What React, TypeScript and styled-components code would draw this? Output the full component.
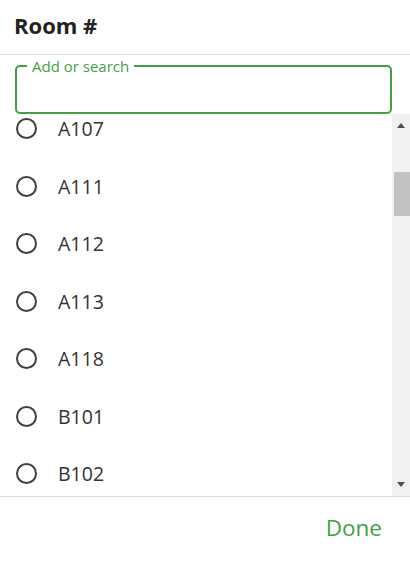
import React, { useLayoutEffect, useRef, useState } from "react";
import styled, { createGlobalStyle } from "styled-components";

const GlobalStyle = createGlobalStyle`
  html, body { margin: 0; padding: 0; background: #fff; }
  body { font-family: "Open Sans", "Noto Sans", sans-serif; }
  * { box-sizing: border-box; }
`;

const GREEN = "#43a047";
const ARROW = "#505050";
const BUTTON_H = 17;

const Dialog = styled.div`
  width: 410px;
  height: 562px;
  display: flex;
  flex-direction: column;
  background: #fff;
`;

const Header = styled.div`
  height: 55px;
  flex: none;
  display: flex;
  align-items: center;
  padding: 0 0 5px 14px;
  border-bottom: 1px solid #dcdcdc;
`;

const Title = styled.h2`
  margin: 0;
  font-size: 22px;
  font-weight: 700;
  color: #222;
`;

const SearchWrap = styled.div`
  flex: none;
  padding: 4px 18px 0 15px;
`;

const Field = styled.fieldset`
  margin: 0;
  height: 55px;
  border: 2px solid ${GREEN};
  border-radius: 5px;
  padding: 0 8px;
`;

const Legend = styled.legend`
  margin-left: 2px;
  padding: 0 5px;
  font-size: 15px;
  color: ${GREEN};
  line-height: 14px;
`;

const ScrollArea = styled.div`
  flex: 1;
  min-height: 0;
  display: flex;
`;

const Viewport = styled.div`
  flex: 1;
  min-width: 0;
  overflow: hidden;
`;

const ScrollBar = styled.div`
  width: 18px;
  flex: none;
  display: flex;
  flex-direction: column;
  background: #f1f1f1;
`;

const ArrowButton = styled.div<{ $dir: "up" | "down" }>`
  height: ${BUTTON_H}px;
  flex: none;
  display: flex;
  justify-content: center;
  align-items: ${(p) => (p.$dir === "up" ? "flex-end" : "flex-start")};
  padding: ${(p) => (p.$dir === "up" ? "0 0 3px 0" : "3px 0 0 0")};

  &::before {
    content: "";
    width: 0;
    height: 0;
    border-left: 4.5px solid transparent;
    border-right: 4.5px solid transparent;
    ${(p) =>
      p.$dir === "up"
        ? `border-bottom: 5px solid ${ARROW};`
        : `border-top: 5px solid ${ARROW};`}
  }
`;

const Track = styled.div`
  flex: 1;
  min-height: 0;
  display: flex;
  flex-direction: column;
  padding-left: 2px;
`;

const Thumb = styled.div`
  background: #c1c1c1;
  flex: none;
`;

const Row = styled.label`
  height: 57.5px;
  display: flex;
  align-items: center;
  padding-left: 16px;
  gap: 21px;
  cursor: pointer;
`;

const Radio = styled.span`
  width: 21px;
  height: 21px;
  border-radius: 50%;
  border: 2px solid #3f3f3f;
  flex: none;
`;

const RowText = styled.span`
  font-size: 19.5px;
  color: #333;
`;

const Footer = styled.div`
  flex: none;
  height: 66px;
  border-top: 1px solid #dcdcdc;
  display: flex;
  align-items: center;
  justify-content: flex-end;
  padding: 0 28px 5px 0;
`;

const DoneButton = styled.button`
  background: none;
  border: none;
  padding: 0;
  font-family: inherit;
  font-size: 22.5px;
  color: ${GREEN};
  cursor: pointer;
`;

const rooms: string[] = [
  "A101", "A102", "A103", "A104", "A105", "A106",
  "A107", "A111", "A112", "A113", "A118", "B101", "B102",
  "B103", "B104", "B105", "B106", "B107", "B108", "B110",
  "B111", "B112", "B113", "B114", "C101", "C102", "C103",
  "C104", "C105", "C106", "C107", "C108", "C110", "C111",
  "C112", "D101", "D102", "D103", "D104", "D105", "D106",
  "D107", "D108", "E101", "E102", "E103", "E104", "E105",
  "E106", "E107", "E108", "Gym", "Library",
];

const INITIAL_SCROLL = 359;

export default function App() {
  const viewRef = useRef<HTMLDivElement>(null);
  const trackRef = useRef<HTMLDivElement>(null);
  const [thumb, setThumb] = useState({ top: 40, height: 45 });

  useLayoutEffect(() => {
    const v = viewRef.current;
    const t = trackRef.current;
    if (!v || !t) return;
    v.scrollTop = INITIAL_SCROLL;
    const trackLen = t.clientHeight;
    const height = Math.max(20, (trackLen * v.clientHeight) / v.scrollHeight);
    const top =
      (v.scrollTop / (v.scrollHeight - v.clientHeight)) * (trackLen - height);
    setThumb({ top, height });
  }, []);

  return (
    <>
      <GlobalStyle />
      <Dialog>
        <Header>
          <Title>Room #</Title>
        </Header>
        <SearchWrap>
          <Field>
            <Legend>Add or search</Legend>
          </Field>
        </SearchWrap>
        <ScrollArea>
          <Viewport ref={viewRef}>
            {rooms.map((r) => (
              <Row key={r}>
                <Radio />
                <RowText>{r}</RowText>
              </Row>
            ))}
          </Viewport>
          <ScrollBar>
            <ArrowButton $dir="up" />
            <Track ref={trackRef}>
              <Thumb style={{ marginTop: thumb.top, height: thumb.height }} />
            </Track>
            <ArrowButton $dir="down" />
          </ScrollBar>
        </ScrollArea>
        <Footer>
          <DoneButton>Done</DoneButton>
        </Footer>
      </Dialog>
    </>
  );
}
